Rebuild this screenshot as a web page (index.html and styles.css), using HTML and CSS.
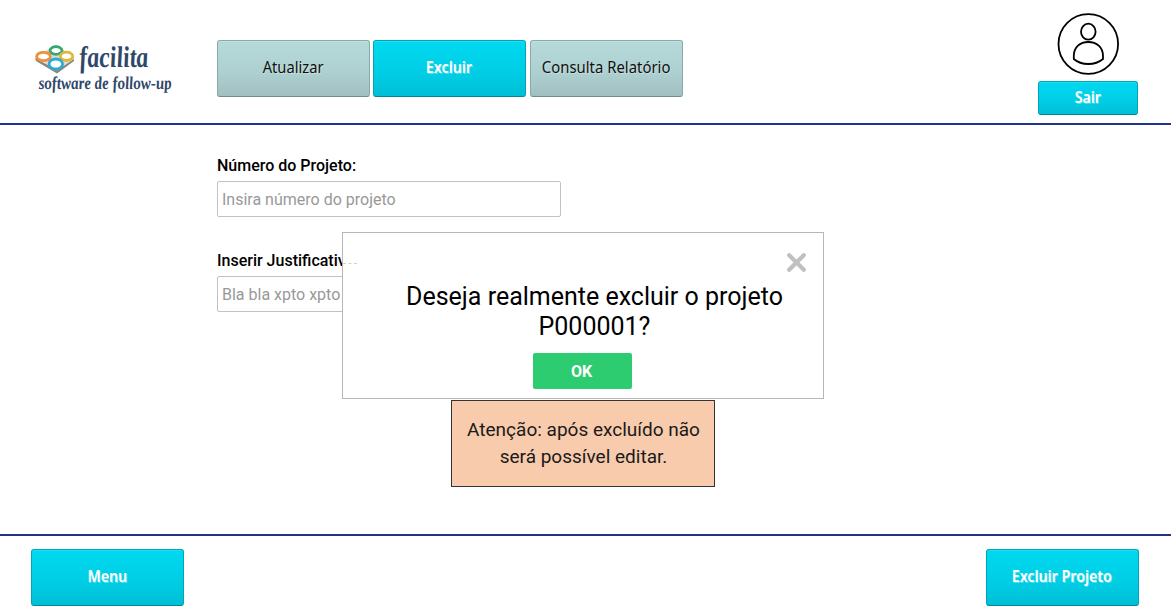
FILE: index.html
```html
<!DOCTYPE html>
<html lang="pt-BR">
<head>
<meta charset="utf-8">
<title>Facilita - Excluir Projeto</title>
<link rel="stylesheet" href="styles.css">
</head>
<body>
<header class="header">
  <svg class="logo" width="146" height="60" viewBox="0 0 146 60" role="img" aria-label="facilita">
    <path d="M5 23 27 35 44 24 44 26 27 38.500 6 26Z" fill="#8d8577"/>
    <path d="M4.500 22 26 10 44.500 23 27 35.500Z" fill="#dcdcd4"/>
    <g fill="#fff" stroke-width="2.800">
      <ellipse cx="26" cy="15.500" rx="6" ry="3.800" stroke="#3aa570"/>
      <ellipse cx="13.500" cy="21.500" rx="6.800" ry="4.200" stroke="#f0903c"/>
      <ellipse cx="36.500" cy="21.300" rx="6.200" ry="4.200" stroke="#e0b840"/>
      <ellipse cx="25.800" cy="29" rx="6.800" ry="5" stroke="#2eabd0"/>
    </g>
    <text class="logo-name" transform="translate(50 32) skewX(5)" textLength="69" lengthAdjust="spacingAndGlyphs">facilita</text>
    <text class="logo-tagline" transform="translate(9 54) skewX(5)" textLength="133" lengthAdjust="spacingAndGlyphs">software de follow-up</text>
  </svg>
  <nav class="tabs">
    <button class="button button-muted"><span class="t-atualizar">Atualizar</span></button>
    <button class="button"><span class="t-excluir">Excluir</span></button>
    <button class="button button-muted"><span class="t-consulta">Consulta Relatório</span></button>
  </nav>
  <div class="account">
    <svg class="avatar" width="62" height="62" viewBox="0 0 62 62" fill="none" stroke="#000" stroke-width="1.800">
      <circle cx="31.300" cy="31" r="29.800"/>
      <ellipse cx="31.300" cy="18.700" rx="7.300" ry="8"/>
      <path d="M16.800 46V43C16.800 34 23 29 31.300 29S46 34 46 43V46Q40 51 31.300 51T16.800 46Z" stroke-linejoin="round"/>
    </svg>
    <button class="button button-small"><span class="t-sair">Sair</span></button>
  </div>
</header>
<main class="content">
  <form class="form">
    <label class="label" for="numero">Número do Projeto:</label>
    <input class="field" id="numero" placeholder="Insira número do projeto">
    <label class="label" for="justificativa">Inserir Justificativa:</label>
    <input class="field" id="justificativa" placeholder="Bla bla xpto xpto">
  </form>
  <p class="warning">Atenção: após excluído não<br>será possível editar.</p>
  <section class="dialog" role="dialog">
    <span class="dashes"></span>
    <svg class="close" width="19" height="19" viewBox="0 0 19 19"><path d="M2.200 2.200 16.800 16.800M16.800 2.200 2.200 16.800" stroke="#c0c0c0" stroke-width="4.200" stroke-linecap="round"/></svg>
    <p class="question">Deseja realmente excluir o projeto<br>P000001?</p>
    <button class="ok">OK</button>
  </section>
</main>
<footer class="footer">
  <button class="button"><span class="t-menu">Menu</span></button>
  <button class="button"><span class="t-projeto">Excluir Projeto</span></button>
</footer>
</body>
</html>
```
FILE: styles.css
```css
* { box-sizing: border-box; }
body {
  margin: 0;
  height: 609px;
  overflow: hidden;
  display: flex;
  flex-direction: column;
  background: #fff;
  color: #000;
  font-family: Roboto, sans-serif;
}
.header {
  height: 125px;
  display: flex;
  align-items: flex-start;
  padding: 0 33px 0 30px;
  border-bottom: 2px solid #213587;
}
.logo { margin-top: 35px; flex: none; overflow: visible; }
.logo-name, .logo-tagline {
  font-family: "Liberation Serif", serif;
  font-style: italic;
  font-weight: bold;
  fill: #2f4769;
}
.logo-name { font-size: 30px; }
.logo-tagline { font-size: 18px; }
.tabs { display: flex; gap: 3.400px; margin: 40px 0 0 41px; }
.button {
  width: 153px;
  height: 57px;
  padding: 0 0 3px;
  border: 1px solid #00a5b8;
  border-bottom-color: #008798;
  border-radius: 3px;
  background: linear-gradient(#00d9f1, #00cde4 60%, #00bfd6);
  box-shadow: inset 0 1px #20dff3;
  color: #fff;
  font: 600 16px "Noto Sans", sans-serif;
  text-shadow: 1px 1px rgba(255, 255, 255, .35);
  white-space: nowrap;
}
.button span { display: inline-block; }
.button-muted {
  color: #111;
  font-weight: 400;
  border-color: #8aaaaa;
  border-bottom-color: #708c8c;
  background: linear-gradient(#b6dada, #adcfcf 60%, #a1bfc0);
  box-shadow: inset 0 1px #c0e2e2;
}
.button-small { width: 100px; height: 34px; padding-bottom: 2px; }
.t-atualizar { transform: scaleX(.92); }
.t-excluir { transform: translateX(-1px) scaleX(.89); }
.t-consulta { transform: scaleX(.93); margin: 0 -10px; }
.t-sair { transform: scaleX(.88); }
.t-menu { transform: scaleX(.89); }
.t-projeto { transform: translateX(-.5px) scaleX(.89); }
.account { margin: 13px 0 0 auto; display: flex; flex-direction: column; align-items: center; gap: 6px; }
.avatar { display: block; }
.content { position: relative; height: 409px; display: flex; flex-direction: column; }
.form { width: 344px; margin: 31px 0 0 217px; display: flex; flex-direction: column; }
.label { height: 25px; font-size: 16px; line-height: 19px; font-weight: 500; }
.field {
  height: 36px;
  padding: 1px 4px 0;
  margin-bottom: 34px;
  border: 1px solid #c2c2c2;
  border-radius: 2px;
  font: 400 16px Roboto, sans-serif;
}
.field::placeholder { color: #999; }
.warning {
  width: 264px;
  height: 87px;
  margin: 54px 0 0 451px;
  padding: 15px 0 0 1px;
  border: 1px solid #333;
  background: #f8cbad;
  color: #1a1a1a;
  font-size: 19px;
  line-height: 27px;
  text-align: center;
  white-space: nowrap;
}
.dialog {
  position: absolute;
  left: 342px;
  top: 107px;
  width: 482px;
  height: 167px;
  border: 1px solid #b7b7b7;
  background: #fff;
  display: flex;
  flex-direction: column;
  align-items: center;
}
.dashes { position: absolute; left: 0; top: 30px; width: 14px; border-top: 1px dashed #d0d0d0; }
.close { position: absolute; left: 444px; top: 20px; }
.question { margin: 49px 0 0 23px; font-size: 25px; line-height: 30px; text-align: center; white-space: nowrap; }
.ok {
  width: 99px;
  height: 36px;
  margin: 11px 2px 0 0;
  padding: 1px 1px 0 0;
  border: 0;
  border-radius: 2px;
  background: #2ecc71;
  color: #fff;
  font: 700 16px Roboto, sans-serif;
}
.footer {
  height: 75px;
  display: flex;
  align-items: flex-start;
  justify-content: space-between;
  padding: 13px 32px 0 31px;
  border-top: 2px solid #213587;
}
```
